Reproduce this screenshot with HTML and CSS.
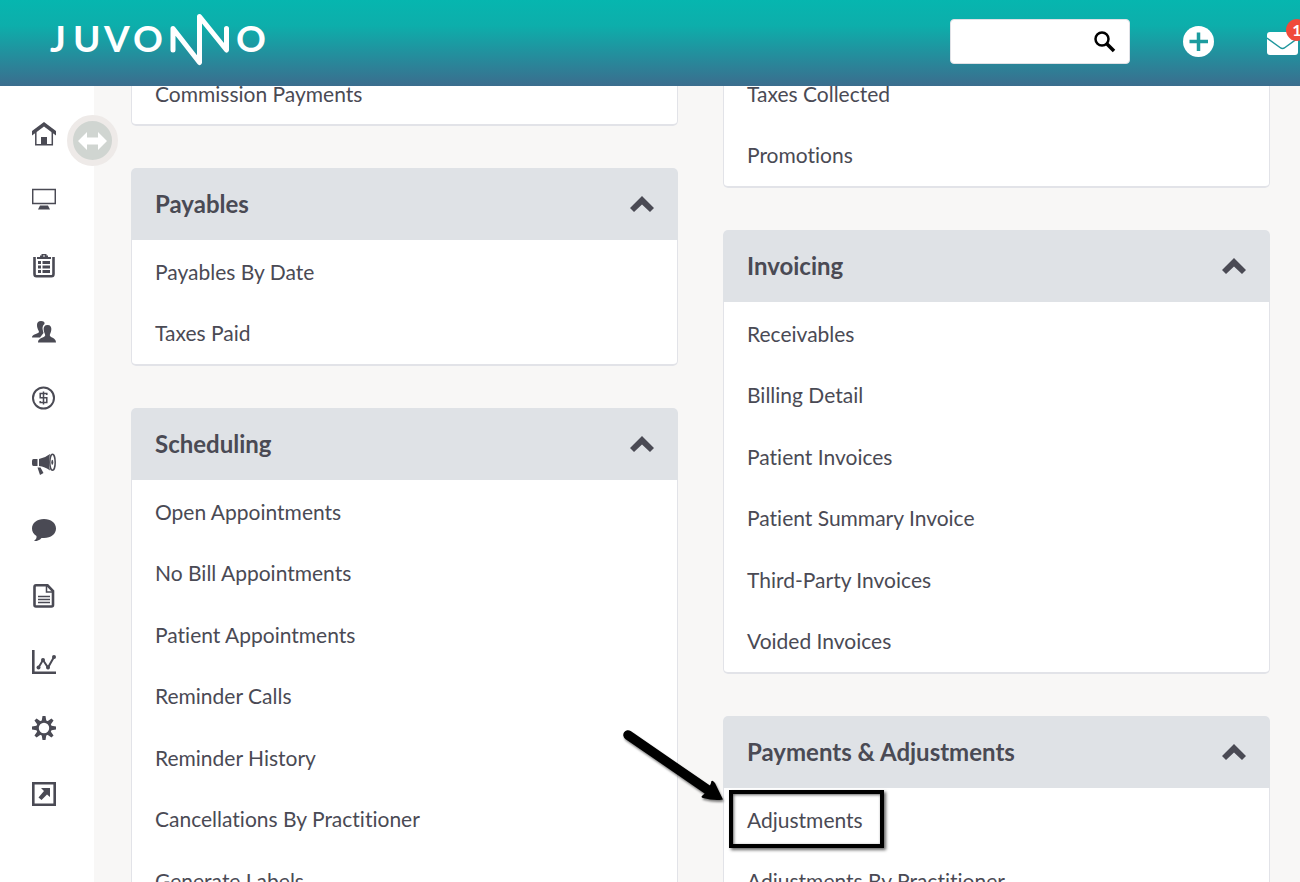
FILE: index.html
```
<!DOCTYPE html>
<html lang="en">

<head>
    <meta charset="UTF-8">
    <meta name="viewport" content="width=device-width, initial-scale=1.0">
    <title>Juvonno Reports</title>
    <link rel="stylesheet" href="styles.css">
</head>

<body>
    <header class="topbar">
        <a href="#" class="logo" aria-label="Juvonno home">
            <svg width="220" height="60" viewBox="48 10 220 60">
                <text y="52" x="50 73 104 133 236">JUVOO</text>
                <path d="M173 50V28.500L199.500 62.500V16.500L226.500 50V28.500" />
            </svg>
        </a>
        <div class="actions">
            <form class="search">
                <input type="text" class="search-input" aria-label="Search">
                <button type="button" class="search-btn" aria-label="Search">
                    <svg width="22" height="22" viewBox="0 0 22 22" fill="none" stroke="#000">
                        <circle cx="8" cy="8" r="6.500" stroke-width="2.500" />
                        <path d="M13 13L20 20" stroke-width="3.500" />
                    </svg>
                </button>
            </form>
            <button type="button" class="icon-btn" aria-label="Add">
                <svg width="31" height="31" viewBox="0 0 31 31">
                    <circle cx="15.500" cy="15.500" r="15.500" fill="#fff" />
                    <path d="M15.500 6.500V25M6.500 15.500H25" stroke="#1c9c9f" stroke-width="3.500" />
                </svg>
            </button>
            <button type="button" class="icon-btn mail" aria-label="Messages">
                <svg width="31" height="23" viewBox="0 0 31 23">
                    <rect width="31" height="23" rx="3" fill="#fff" />
                    <path d="M0 6L13 15.500Q15.500 17.500 18 15.500L31 6" fill="none" stroke="#1f979d" stroke-width="1.500" />
                </svg>
                <span class="badge">1</span>
            </button>
        </div>
    </header>

    <div class="layout">
        <nav class="sidebar">
            <button type="button" class="toggle" aria-label="Expand menu">
                <svg width="29" height="18" viewBox="0 0 29 18" fill="#fff">
                    <path d="M0 9L9 0V5.500H20V0L29 9L20 18V12.500H9V18Z" />
                </svg>
            </button>
            <a href="#" class="nav-link" aria-label="Home">
                <svg viewBox="0 0 24 24">
                    <path d="M12 0L24 9V13.500L12 4.500L0 13.500V9Z" />
                    <path d="M3.800 10V22.800H20.300V10" class="line" />
                    <path d="M9 15H15V23H9Z" />
                </svg>
            </a>
            <a href="#" class="nav-link" aria-label="Desktop">
                <svg viewBox="0 0 24 24">
                    <path d="M.7 1.500H23.300V15.500H.7Z" class="line" />
                    <path d="M8 17.500H16L18 21.500H6Z" />
                </svg>
            </a>
            <a href="#" class="nav-link" aria-label="Charts">
                <svg viewBox="0 0 24 24">
                    <path d="M2.500 3V20Q2.500 22.300 4.500 22.300H19.500Q21.500 22.300 21.500 20V3" class="line thick" />
                    <path d="M5 3H8V1.500H9.500V0H14.500V1.500H16V3H19V5H5Z" />
                    <path d="M11 1.500H13V2.500H11Z" fill="#fff" />
                    <path d="M6 7H9V10H6ZM10.500 7H18V10H10.500ZM6 11.500H9V14.500H6ZM10.500 11.500H18V14.500H10.500ZM6 16H9V19H6ZM10.500 16H18V19H10.500Z" />
                </svg>
            </a>
            <a href="#" class="nav-link" aria-label="Patients">
                <svg viewBox="0 0 24 24">
                    <path d="M9 1C11.500 1 13 2 12.500 4C10.500 5.500 10 8 11 11L11.500 13L8 17.500H0C0 14 6 14 7 12C7 10.500 5 9 5 5C5 2.500 6.500 1 9 1Z" />
                    <path d="M15.500 5C18.500 5 19.700 7 19.300 10C19 13 17.800 13.500 17.800 15.500C18.500 18 24 17.500 24 22.500H6C6 17.500 12.500 18 13.200 15.500C13.200 13.500 12 13 11.700 10C11.300 7 12.500 5 15.500 5Z" />
                </svg>
            </a>
            <a href="#" class="nav-link" aria-label="Billing">
                <svg viewBox="0 0 24 24">
                    <circle cx="11.500" cy="12" r="10.500" class="line medium" />
                    <path d="M14.800 9V7.500H8.200V11.800H14.800V16.500H8.200V15M11.500 5.500V18.500" class="line" />
                </svg>
            </a>
            <a href="#" class="nav-link" aria-label="Marketing">
                <svg viewBox="0 0 24 24">
                    <path d="M1.500 7H5.500V14H1.500Q0 14 0 12V9Q0 7 1.500 7ZM7 7Q13 6 18 2Q16 11 18 18.500Q13 14.500 7 14ZM5.500 15.500H8.500L11.500 21L8 23Z" />
                    <ellipse cx="20.500" cy="10.300" rx="2.700" ry="8" class="line" />
                    <ellipse cx="20.300" cy="10.300" rx="1" ry="2.500" />
                </svg>
            </a>
            <a href="#" class="nav-link" aria-label="Messages">
                <svg viewBox="0 0 24 24">
                    <path d="M12 1C19 1 24 5 24 10.500C24 16 19 20 12 20L9.500 20C7.500 22.500 4.500 23.300 2 23C4 21.500 4.800 20 4.500 18C1.500 16.500 0 13.500 0 10.500C0 5 5 1 12 1Z" />
                </svg>
            </a>
            <a href="#" class="nav-link" aria-label="Documents">
                <svg viewBox="0 0 24 24">
                    <path d="M4 1.300H15.500L21 7V21Q21 22.500 19.500 22.500H4Q2.500 22.500 2.500 21V3Q2.500 1.300 4 1.300Z" class="line thick" />
                    <path d="M14.500 2V8H20.500M6 12.500H18M6 15.500H18M6 18.500H18" class="line" />
                </svg>
            </a>
            <a href="#" class="nav-link" aria-label="Reports">
                <svg viewBox="0 0 24 24">
                    <path d="M1.300 0V22.700H24" class="line thick" />
                    <path d="M6.500 17.500L11 10L16 17.500L22 7" class="line medium" />
                    <circle cx="6.500" cy="17.500" r="2" />
                    <circle cx="11" cy="10" r="2" />
                    <circle cx="16" cy="17.500" r="2" />
                    <circle cx="22" cy="7" r="2" />
                </svg>
            </a>
            <a href="#" class="nav-link" aria-label="Settings">
                <svg viewBox="0 0 24 24">
                    <circle cx="12" cy="12" r="6.500" class="line thick" />
                    <path d="M10.500 0H13.500L14.500 6H9.500ZM10.500 24H13.500L14.500 18H9.500ZM0 10.500V13.500L6 14.500V9.500ZM24 10.500V13.500L18 14.500V9.500Z" />
                    <path d="M10.500 0H13.500L14.500 6H9.500ZM10.500 24H13.500L14.500 18H9.500ZM0 10.500V13.500L6 14.500V9.500ZM24 10.500V13.500L18 14.500V9.500Z" transform="rotate(45 12 12)" />
                </svg>
            </a>
            <a href="#" class="nav-link" aria-label="Open external">
                <svg viewBox="0 0 24 24">
                    <path d="M1.300 1.300H22.700V22.700H1.300Z" class="line thick" />
                    <path d="M9 6H18V15L15 12.500L9.500 18L6.500 15.500L12 9Z" />
                </svg>
            </a>
        </nav>

        <main class="reports">
            <div class="column">
                <section class="panel">
                    <ul class="report-list">
                        <li><a href="#">Commission Payments</a></li>
                    </ul>
                </section>
                <section class="panel">
                    <h2><button type="button" class="panel-head">Payables
                        <svg width="24" height="16" viewBox="0 0 24 16"><path d="M12 0L24 12L20 16L12 8.500L4 16L0 12Z" /></svg>
                    </button></h2>
                    <ul class="report-list">
                        <li><a href="#">Payables By Date</a></li>
                        <li><a href="#">Taxes Paid</a></li>
                    </ul>
                </section>
                <section class="panel">
                    <h2><button type="button" class="panel-head">Scheduling
                        <svg width="24" height="16" viewBox="0 0 24 16"><path d="M12 0L24 12L20 16L12 8.500L4 16L0 12Z" /></svg>
                    </button></h2>
                    <ul class="report-list">
                        <li><a href="#">Open Appointments</a></li>
                        <li><a href="#">No Bill Appointments</a></li>
                        <li><a href="#">Patient Appointments</a></li>
                        <li><a href="#">Reminder Calls</a></li>
                        <li><a href="#">Reminder History</a></li>
                        <li><a href="#">Cancellations By Practitioner</a></li>
                        <li><a href="#">Generate Labels</a></li>
                    </ul>
                </section>
            </div>

            <div class="column">
                <section class="panel">
                    <ul class="report-list">
                        <li><a href="#">Taxes Collected</a></li>
                        <li><a href="#">Promotions</a></li>
                    </ul>
                </section>
                <section class="panel">
                    <h2><button type="button" class="panel-head">Invoicing
                        <svg width="24" height="16" viewBox="0 0 24 16"><path d="M12 0L24 12L20 16L12 8.500L4 16L0 12Z" /></svg>
                    </button></h2>
                    <ul class="report-list">
                        <li><a href="#">Receivables</a></li>
                        <li><a href="#">Billing Detail</a></li>
                        <li><a href="#">Patient Invoices</a></li>
                        <li><a href="#">Patient Summary Invoice</a></li>
                        <li><a href="#">Third-Party Invoices</a></li>
                        <li><a href="#">Voided Invoices</a></li>
                    </ul>
                </section>
                <section class="panel">
                    <h2><button type="button" class="panel-head">Payments &amp; Adjustments
                        <svg width="24" height="16" viewBox="0 0 24 16"><path d="M12 0L24 12L20 16L12 8.500L4 16L0 12Z" /></svg>
                    </button></h2>
                    <ul class="report-list">
                        <li class="highlighted">
                            <a href="#">Adjustments</a>
                            <svg class="arrow" width="110" height="80" viewBox="0 0 110 80">
                                <path d="M8 8L88 63" stroke="#000" stroke-width="9.500" stroke-linecap="round" />
                                <path d="M91 56Q91 53 93 54L95 56L103 72.500Q94 74 83 71Q80 70 83 68L88 63Z" />
                            </svg>
                        </li>
                        <li><a href="#">Adjustments By Practitioner</a></li>
                    </ul>
                </section>
            </div>
        </main>
    </div>
</body>

</html>
```
FILE: styles.css
```
*,
*::after {
    margin: 0;
    padding: 0;
    box-sizing: border-box;
}

body {
    font-family: Lato, "Liberation Sans", sans-serif;
    font-size: 21px;
    font-variant-ligatures: none;
    color: #4a4a54;
    background-color: #f8f7f6;
    height: 100vh;
    overflow: hidden;
}

a {
    color: inherit;
    text-decoration: none;
}

button {
    font: inherit;
    color: inherit;
    background: none;
    border: none;
    cursor: pointer;
}

/* top bar */
.topbar {
    position: fixed;
    top: 0;
    left: 0;
    right: 0;
    z-index: 10;
    height: 86px;
    padding: 0 2px 0 48px;
    display: flex;
    align-items: center;
    justify-content: space-between;
    background: linear-gradient(#06b6af, #0daeab 30%, #3b6d8e);
    overflow: hidden;
}

.logo svg {
    display: block;
    margin-bottom: 6px;
}

.logo text {
    font-size: 37px;
    font-weight: bold;
    fill: #fff;
}

.logo path {
    fill: none;
    stroke: #fff;
    stroke-width: 5;
    stroke-linecap: round;
    stroke-linejoin: round;
}

.actions {
    display: flex;
    align-items: center;
    gap: 53px;
    padding-bottom: 3px;
}

.search {
    display: flex;
    width: 180px;
    height: 45px;
    background-color: #fff;
    border: 1px solid #dfe1e6;
    border-radius: 4px;
}

.search-input {
    flex: 1;
    min-width: 0;
    padding-left: 12px;
    font: inherit;
    border: none;
    background: none;
    outline: none;
}

.search-btn {
    width: 48px;
    display: flex;
    align-items: center;
    justify-content: center;
}

.icon-btn {
    position: relative;
    width: 31px;
}

.icon-btn svg {
    display: block;
}

.mail {
    padding-top: 3px;
}

.badge {
    position: absolute;
    top: -10px;
    left: 19px;
    width: 22px;
    height: 22px;
    border-radius: 50%;
    background-color: #f04a3a;
    color: #fff;
    font-size: 16px;
    font-weight: bold;
    line-height: 22px;
    text-align: center;
}

/* side menu */
.layout {
    display: flex;
    height: 100%;
}

.sidebar {
    position: relative;
    flex: none;
    width: 94px;
    padding-top: 101px;
    background-color: #fff;
}

.nav-link {
    display: flex;
    align-items: center;
    height: 66px;
    padding-left: 32px;
}

.nav-link svg {
    width: 24px;
    height: 24px;
    fill: #4a4a54;
}

.nav-link .line {
    fill: none;
    stroke: #4a4a54;
    stroke-width: 1.5;
}

.nav-link .medium {
    stroke-width: 2;
}

.nav-link .thick {
    stroke-width: 2.6;
}

.toggle {
    position: absolute;
    top: 115px;
    left: 67px;
    width: 51px;
    height: 51px;
    display: flex;
    align-items: center;
    justify-content: center;
    border: 6px solid #eeeae8;
    border-radius: 50%;
    background-color: #d0d5d1;
}

.toggle svg {
    flex: none;
}

/* report panels */
.reports {
    flex: 1;
    display: grid;
    grid-template-columns: 1fr 1fr;
    gap: 45px;
    padding: 62px 30px 0 37px;
}

.column {
    display: flex;
    flex-direction: column;
    gap: 42px;
}

.panel {
    background-color: #fff;
    border-radius: 5px;
}

.panel-head {
    display: flex;
    align-items: center;
    justify-content: space-between;
    width: 100%;
    height: 72px;
    padding: 0 24px 1px;
    background-color: #dfe2e6;
    border-radius: 5px 5px 0 0;
    font-size: 24px;
    font-weight: bold;
}

.panel-head svg {
    fill: #4a4a54;
}

.report-list {
    display: grid;
    grid-auto-rows: 61px 62px;
    padding-bottom: 1px;
    list-style: none;
    border: 1px solid #e2e3e8;
    border-top: none;
    border-bottom-width: 2px;
    border-radius: 0 0 5px 5px;
}

.report-list li {
    display: flex;
    align-items: center;
    padding: 1px 23px 0;
}

/* callout on the report to open */
.highlighted {
    position: relative;
}

.highlighted::after {
    content: "";
    position: absolute;
    top: 2px;
    left: 5px;
    width: 155px;
    height: 58px;
    border: 4px solid #000;
    box-shadow: 2px 2px 3px rgba(0, 0, 0, 0.6), inset 1px 1px 3px rgba(0, 0, 0, 0.6);
    pointer-events: none;
}

.arrow {
    position: absolute;
    top: -61px;
    left: -104px;
    filter: drop-shadow(1px 2px 1px rgba(0, 0, 0, 0.5));
}
```
